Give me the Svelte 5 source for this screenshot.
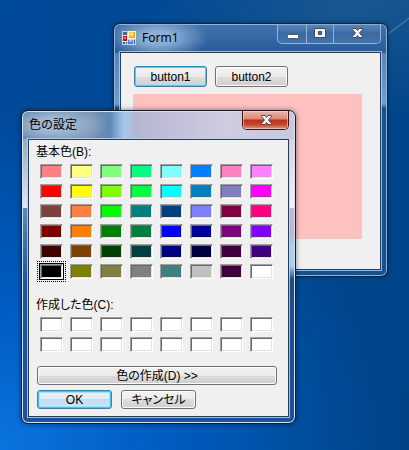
<script lang="ts">
  const basicColors = [
    ['#ff8080', '#ffff80', '#80ff80', '#00ff80', '#80ffff', '#0080ff', '#ff80c0', '#ff80ff'],
    ['#ff0000', '#ffff00', '#80ff00', '#00ff40', '#00ffff', '#0080c0', '#8080c0', '#ff00ff'],
    ['#804040', '#ff8040', '#00ff00', '#008080', '#004080', '#8080ff', '#800040', '#ff0080'],
    ['#800000', '#ff8000', '#008000', '#008040', '#0000ff', '#0000a0', '#800080', '#8000ff'],
    ['#400000', '#804000', '#004000', '#004040', '#000080', '#000040', '#400040', '#400080'],
    ['#000000', '#808000', '#808040', '#808080', '#408080', '#c0c0c0', '#400040', '#ffffff'],
  ].flat();

  const customColors = Array(16).fill('#ffffff');

  let selected = $state(40);
</script>

<main class="desktop">
  <section class="window form" aria-label="Form1">
    <header class="titlebar">
      <svg class="app-icon" width="14" height="14" viewBox="0 0 14 14" shape-rendering="crispEdges">
        <rect width="14" height="14" fill="#c9d3e0" />
        <path d="M1 1h4v3H1zM1 11h2v2H1zM4 11h1v2H4zM12 9h1v4h-1z" fill="#3f659c" />
        <rect x="6" y="0" width="8" height="8" fill="#fff3c4" />
        <rect x="7" y="1" width="6" height="6" fill="#e0a010" />
        <rect x="7" y="1" width="5" height="5" fill="#fbc93a" />
        <rect x="8" y="2" width="3" height="2" fill="#ffe78a" />
        <rect x="0" y="4" width="6" height="7" fill="#f0d8d4" />
        <rect x="1" y="5" width="4" height="5" fill="#b51c10" />
        <rect x="2" y="6" width="2" height="2" fill="#ec7a66" />
        <rect x="6" y="9" width="5" height="4" fill="#4b80d8" />
        <rect x="7" y="9" width="3" height="2" fill="#9cc1f7" />
      </svg>
      <h1 class="title">Form1</h1>
      <div class="caption-buttons">
        <button class="caption" aria-label="最小化">
          <svg width="28" height="19" viewBox="0 0 28 19">
            <rect x="9.500" y="10.500" width="11" height="4" rx="1" fill="#fff" stroke="#4b5a70" />
          </svg>
        </button>
        <button class="caption" aria-label="最大化">
          <svg width="26" height="19" viewBox="0 0 26 19">
            <path d="M7.500 4.500h11v9h-11zM11.500 7.500v3h3v-3z" fill="#f4f4f4" fill-rule="evenodd" stroke="#4b4a58" />
          </svg>
        </button>
        <button class="caption" aria-label="閉じる">
          <svg width="46" height="19" viewBox="0 0 46 19">
            <path d="M18.500 4.500h3.500l1.500 2 1.500-2h3.500v1l-3 3.500 3 3.500v1h-3.500l-1.500-2-1.500 2h-3.500v-1l3-3.500-3-3.500z" fill="#f6f6f6" stroke="#4b4a58" />
          </svg>
        </button>
      </div>
    </header>
    <div class="client form-client">
      <div class="button-row">
        <button class="push default">button1</button>
        <button class="push">button2</button>
      </div>
      <div class="panel"></div>
    </div>
  </section>

  <div class="window dialog" role="dialog" aria-labelledby="dialog-title">
    <header class="titlebar">
      <h2 class="title" id="dialog-title">色の設定</h2>
      <div class="caption-buttons red">
        <button class="caption" aria-label="閉じる">
          <svg width="45" height="18" viewBox="0 0 45 18">
            <path d="M18.500 4.500h3.500l1.500 2 1.500-2h3.500v1l-3 3.500 3 3.500v1h-3.500l-1.500-2-1.500 2h-3.500v-1l3-3.500-3-3.500z" fill="#f6f6f6" stroke="#4b4a58" />
          </svg>
        </button>
      </div>
    </header>
    <div class="client dialog-client">
      <h3 class="label" id="basic-label">基本色(B):</h3>
      <div class="swatches basic" role="group" aria-labelledby="basic-label">
        {#each basicColors as color, i}
          <button
            class="swatch"
            class:selected={selected === i}
            style="background-color: {color}"
            aria-label={color}
            onclick={() => (selected = i)}
          ></button>
        {/each}
      </div>
      <h3 class="label" id="custom-label">作成した色(C):</h3>
      <div class="swatches" role="group" aria-labelledby="custom-label">
        {#each customColors as color, i}
          <button class="swatch" style="background-color: {color}" aria-label="作成した色 {i + 1}"></button>
        {/each}
      </div>
      <button class="push define">色の作成(D) &gt;&gt;</button>
      <div class="button-row">
        <button class="push ok">OK</button>
        <button class="push">キャンセル</button>
      </div>
    </div>
  </div>
</main>

<style>
  :global(body) {
    margin: 0;
  }

  .desktop {
    position: relative;
    min-height: 100vh;
    overflow: hidden;
    font: 12px/14px 'Liberation Sans', 'Noto Sans CJK JP', sans-serif;
    font-feature-settings: 'palt';
    color: #000;
    background:
      linear-gradient(143deg, transparent 49%, rgba(120, 170, 215, 0.5) 50%, transparent 52%) 100% 0 / 40px 66px no-repeat,
      radial-gradient(ellipse 220px 120px at 88% 0, rgba(50, 105, 150, 0.5), transparent),
      radial-gradient(ellipse 95% 75% at 0 100%, #0b74e0, rgba(0, 98, 206, 0.8) 40%, transparent),
      linear-gradient(100deg, #004a9c, #00488f 60%, #004488);
  }

  .window {
    position: absolute;
    box-sizing: border-box;
    width: max-content;
    padding: 0 6px 6px;
    border: 1px solid #10233f;
    border-radius: 7px;
  }

  .form {
    left: 113px;
    top: 23px;
    background:
      radial-gradient(ellipse 50px 22px at 44px 14px, rgba(175, 205, 232, 0.7) 30%, transparent) 0 0 / 100% 28px no-repeat,
      linear-gradient(#4474ae, #285c9c 28px, #5586bc 30px, #6f9dcc 80px, #16508f 84px, #16508f);
    box-shadow: inset 0 0 0 1px #8fb4da, 0 0 4px rgba(0, 20, 50, 0.5);
  }

  .dialog {
    left: 21px;
    top: 110px;
    border-color: #131a28;
    background:
      radial-gradient(ellipse 56px 22px at 30px 14px, rgba(190, 208, 228, 0.7) 30%, transparent) 0 0 / 100% 28px no-repeat,
      linear-gradient(90deg, #4f78a5 0, #7590b2 70px, #6088b5 88px, #a5c9ec 102px, #b5b5d2 114px, #cfcce0 200px, #cac8dc) 0 0 / 100% 28px no-repeat,
      linear-gradient(#c9c8dc 0, #f1f0f7 97px, #bdb9d4 97px, #b8b6d3 124px, #a9cff2 135px, #a9cff2 155px, #1b4d88 168px, #1c529a) 100% 0 / 8px 100% no-repeat,
      linear-gradient(#7591b4 0, #e0e9f3 97px, #5c88b9 97px, #1c569c 170px, #1c529a);
    box-shadow: inset 0 0 0 1px #d4e2f0, 0 0 5px rgba(0, 10, 30, 0.5);
  }

  .titlebar {
    display: flex;
    align-items: center;
    height: 28px;
  }

  .app-icon {
    margin: 0 6px 0 2px;
  }

  .title {
    margin: 0;
    font: 12px/16px 'Noto Sans', 'Noto Sans CJK JP', sans-serif;
  }

  .dialog .title {
    padding-left: 1px;
    font-feature-settings: normal;
  }

  .caption-buttons {
    display: flex;
    align-self: flex-start;
    margin-left: auto;
    border: 1px solid #93b5d8;
    border-top: 0;
    border-radius: 0 0 5px 5px;
    overflow: hidden;
  }

  .caption {
    padding: 0;
    border: 0;
    background: linear-gradient(rgba(130, 165, 205, 0.4), rgba(60, 100, 150, 0.3) 50%, rgba(110, 150, 195, 0.3));
  }

  .caption + .caption {
    border-left: 1px solid #93b5d8;
  }

  .caption svg {
    display: block;
  }

  .red {
    border-color: #3c1414;
  }

  .red .caption {
    background: linear-gradient(#eab4aa, #d98a7c 8px, #b8301a 9px, #c64a32 14px, #e6a080);
    box-shadow: inset 0 0 0 1px rgba(255, 210, 200, 0.6);
  }

  .client {
    border: 1px solid #263c5c;
    background: #f0f0f0;
    box-shadow: 0 0 0 1px rgba(185, 212, 238, 0.8);
  }

  .form-client {
    padding: 13px 18px 30px 12px;
  }

  .form .button-row {
    gap: 8px;
    padding-left: 1px;
  }

  .form .push {
    width: 73px;
    height: 21px;
  }

  .panel {
    width: 229px;
    height: 145px;
    margin-top: 7px;
    background: #ffc0c0;
  }

  .dialog-client {
    padding: 5px 11px 7px 7px;
  }

  .label {
    margin: 0;
    font-size: 12px;
    font-weight: normal;
    line-height: 14px;
  }

  .swatches {
    display: grid;
    grid-template-columns: repeat(8, 23px);
    gap: 5px 7px;
    padding: 5px 3px 14px 4px;
  }

  .basic {
    padding-bottom: 19px;
  }

  .swatch {
    height: 15px;
    padding: 0;
    border: 1px solid;
    border-color: #a0a0a0 #fff #fff #a0a0a0;
    box-shadow:
      inset 1px 1px #696969,
      inset -1px -1px #e3e3e3;
  }

  .selected {
    outline: 1px dotted #000;
    outline-offset: 2px;
    box-shadow:
      inset 1px 1px #696969,
      inset -1px -1px #e3e3e3,
      0 0 0 1px #000;
  }

  .button-row {
    display: flex;
    gap: 9px;
  }

  .push {
    padding: 0;
    border: 1px solid #707070;
    border-radius: 3px;
    background: linear-gradient(#f2f2f2, #ebebeb 50%, #dddddd 50%, #cfcfcf);
    box-shadow: inset 0 0 0 1px #fbfbfb;
    font: inherit;
    font-feature-settings: inherit;
    color: inherit;
  }

  .dialog .push {
    width: 75px;
    height: 19px;
  }

  .dialog .button-row {
    padding-left: 1px;
  }

  .dialog .define {
    width: 240px;
    margin: 0 0 5px 1px;
  }

  .default {
    border-color: #3c7fb1;
    box-shadow: inset 0 0 0 1px #48d0f8;
  }

  .ok {
    border-color: #3c7fb1;
    background: linear-gradient(#eaf2fa, #dfeaf6 50%, #c5daef 50%, #cfe4f8);
    box-shadow: inset 0 0 0 1px #40c4f0, inset 0 0 0 2px #a5e2f8;
  }
</style>
